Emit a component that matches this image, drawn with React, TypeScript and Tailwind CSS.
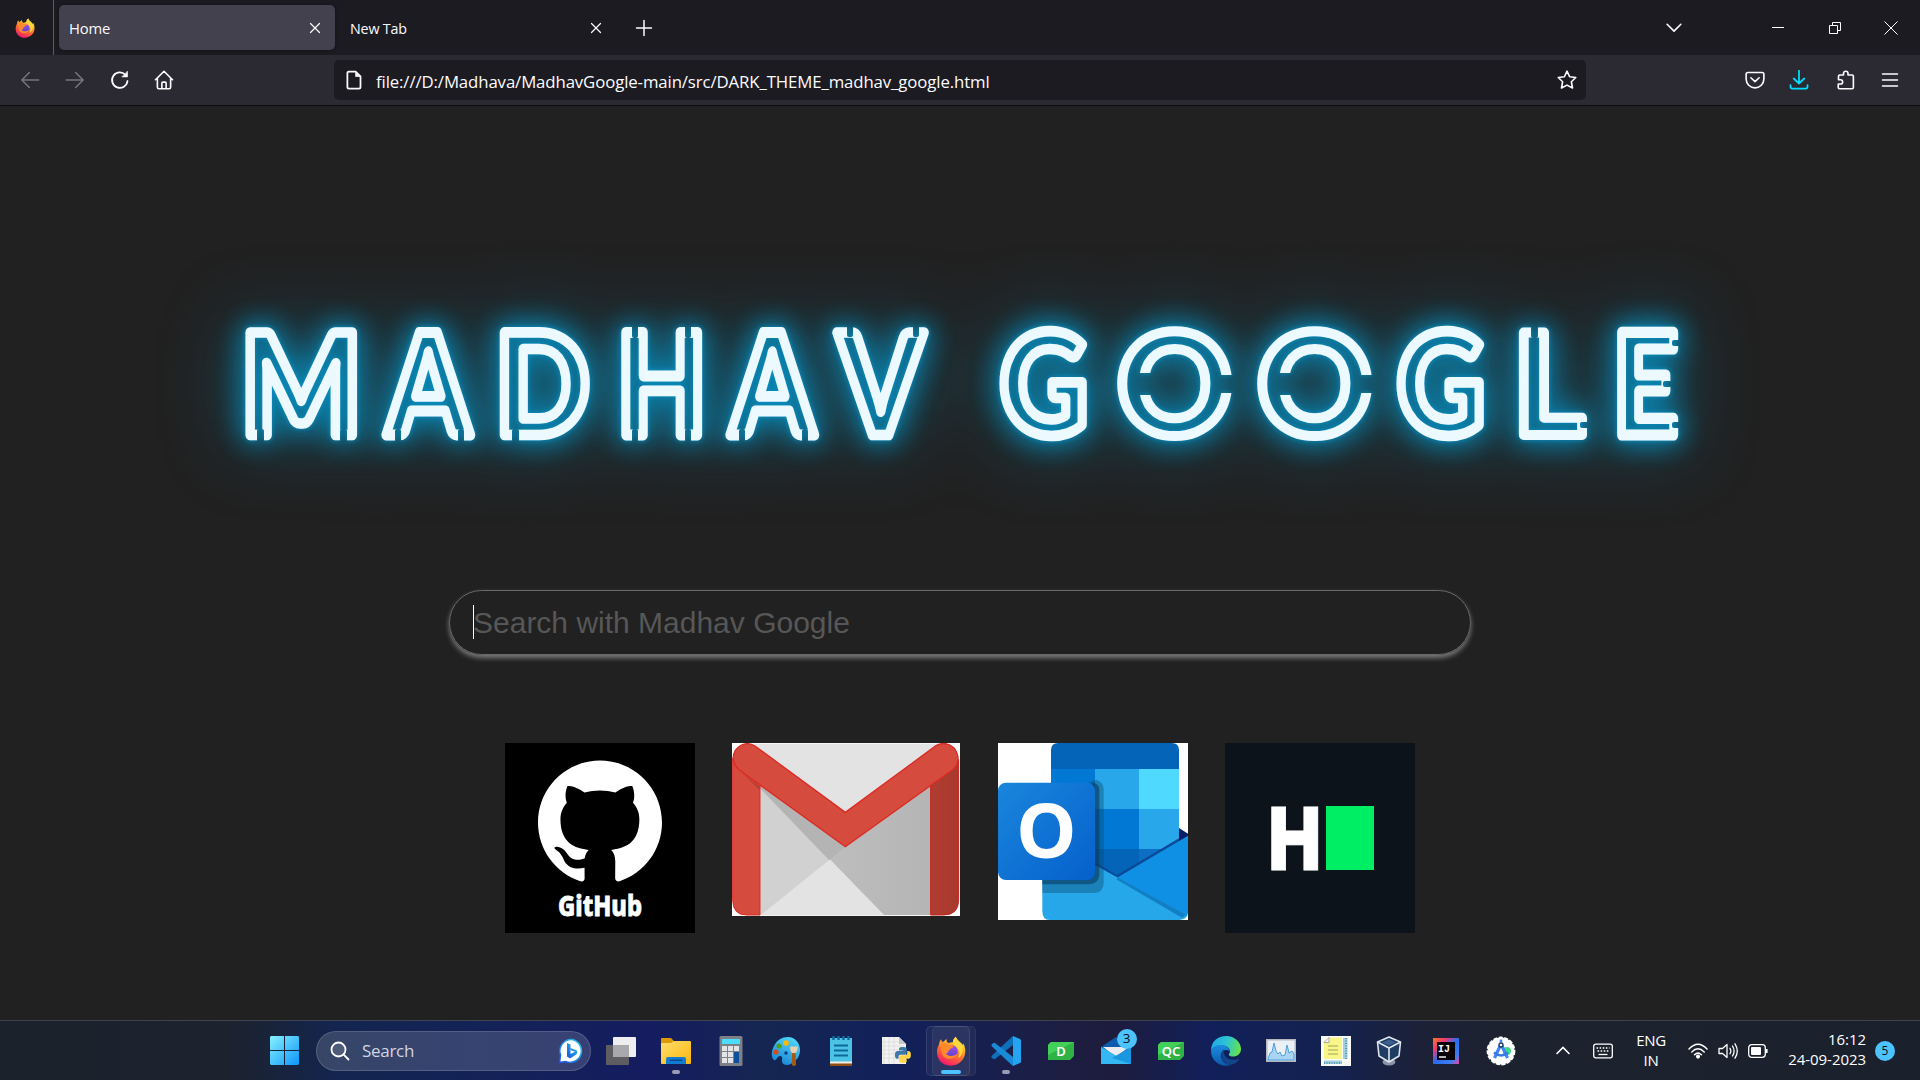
import React from "react";
import { SiGithub } from "react-icons/si";

const UI = "font-['Open_Sans','Noto_Sans',sans-serif]";

function Firefox({ size, id }: { size: number; id: string }) {
  return (
    <svg width={size} height={size} viewBox="0 0 30 30">
      <defs>
        <linearGradient id={id + "a"} x1="0.8" y1="0" x2="0.3" y2="1">
          <stop offset="0" stopColor="#fff44f" />
          <stop offset="0.3" stopColor="#ffb52e" />
          <stop offset="0.6" stopColor="#ff6a33" />
          <stop offset="1" stopColor="#f0146e" />
        </linearGradient>
        <linearGradient id={id + "b"} x1="0.5" y1="0" x2="0.5" y2="1">
          <stop offset="0" stopColor="#a04fe8" />
          <stop offset="1" stopColor="#5b3fd0" />
        </linearGradient>
      </defs>
      <path fill={`url(#${id}a)`} d="M17 6 C17 3 19 1.4 20 .8 C20.3 4 25 6 26.5 9 C27 8.6 27 7.5 27 7.3 C30 11 30.5 19 26 24.5 C20 31.500 9 31 4 25 C0 20 .3 13 3 8.500 C3.200 6 4.200 4 5 3.200 C5.200 4.500 6 5.800 7 6 C9 4.500 9.500 3.500 10.500 3 C10.500 5 11 6 12 7 Z" />
      <circle cx="15.500" cy="15.500" r="6.300" fill={`url(#${id}b)`} />
      <path fill="#ff8a2b" d="M3.500 9 C6 6.500 11 7 13 9 L18 9.500 C17.500 12 14.500 12 14 13.500 C12 14 13 17 10 17.500 C11 20 17 21.500 21 17.500 C20 24 9 25 6 18 C5 15 6 12 3.500 9Z" />
      <path fill="#ffd93b" d="M17 6 C17 3 19 1.400 20 .8 C20.300 4 25 6 26.500 10 C28 15 25 21 22 22 C25 17 23 11 17 8Z" />
    </svg>
  );
}

function Icon({ children, size = 20, color = "#fbfbfe", w = 1.2 }: { children: React.ReactNode; size?: number; color?: string; w?: number }) {
  return (
    <svg width={size} height={size} viewBox="0 0 16 16" fill="none" stroke={color} strokeWidth={w} strokeLinecap="round" strokeLinejoin="round">
      {children}
    </svg>
  );
}

const CloseMark = () => (
  <Icon size={12} w={1.6}>
    <path d="M2 2l12 12M14 2L2 14" />
  </Icon>
);

function TabStrip() {
  return (
    <div className="flex h-[55px] items-center bg-[#1c1b22]">
      <div className="flex h-full w-[54px] items-center border-r border-[#5b5b66] pl-[15px]">
        <Firefox size={20} id="fs" />
      </div>
      <div className="ml-[5px] flex h-[45px] w-[276px] items-center justify-between rounded-[5px] bg-[#42414d] pl-[10px] pr-[14px] shadow-[0_0_4px_rgba(0,0,0,0.4)]">
        <span className="pt-px text-[14.800px] leading-5 tracking-[-0.2px] text-[#fbfbfe]">Home</span>
        <CloseMark />
      </div>
      <div className="flex h-[45px] w-[282px] items-center justify-between pl-[15px] pr-[15px]">
        <span className="pt-[2px] text-[14.300px] leading-5 tracking-[-0.2px] text-[#fbfbfe]">New Tab</span>
        <CloseMark />
      </div>
      <div className="ml-[16.500px]">
        <Icon w={1.2}><path d="M8 2v12M2 8h12" /></Icon>
      </div>
      <div className="ml-auto flex items-center">
        <div className="flex w-[103px] justify-start"><Icon w={1.300}><path d="M2.500 5l5.500 5.500L13.500 5" /></Icon></div>
        <div className="flex w-[57px] justify-start pl-[5px]"><div className="h-px w-3 bg-white" /></div>
        <svg width="14" height="14" viewBox="0 0 14 14" fill="none" stroke="#fff" className="ml-[4px]">
          <path d="M1.500 4.500h8v8h-8zM4.500 4.500v-3h8v8h-3" />
        </svg>
        <svg width="14" height="14" viewBox="0 0 14 14" stroke="#fff" className="ml-[42px] mr-[22px]">
          <path d="M.5 .5l13 13M13.500 .5l-13 13" />
        </svg>
      </div>
    </div>
  );
}

function NavBar() {
  return (
    <div className="flex h-[51px] items-center border-b border-[#0c0c0d] bg-[#2b2a33]">
      <div className="flex w-[334px] items-center gap-[24.800px] pl-5">
        <Icon color="#77767e"><path d="M15 8H1.500M7.500 2L1.500 8l6 6" /></Icon>
        <Icon color="#77767e"><path d="M1 8h13.500M8.500 2l6 6-6 6" /></Icon>
        <Icon w={1.400}>
          <path d="M14 8.800A6.200 6.200 0 1 1 12.300 3.800" />
          <path d="M14 1.200v4.300H9.700z" fill="#fbfbfe" strokeWidth=".5" />
        </Icon>
        <Icon w={1.300}>
          <path d="M1.200 7.800L8 1l6.800 6.800M2.700 6.500v7.300q0 1.200 1.200 1.200h8.200q1.200 0 1.200-1.200V6.500M6.300 15v-4.500q0-.8.8-.8h1.800q.8 0 .8.8V15" />
        </Icon>
      </div>
      <div className="flex h-10 w-[1252px] items-center rounded-[5px] bg-[#1c1b22] pl-[10px] pr-[9px]">
        <Icon w={1.400}>
          <path d="M3.500 1.200h5.800l3.900 3.900v8.500q0 1.300-1.300 1.300H4q-1.300 0-1.300-1.300V2.500q0-1.300 1.300-1.300" />
          <path d="M9.300 1.500v3.700h3.700z" fill="#fbfbfe" strokeWidth=".6" />
        </Icon>
        <span className="ml-[12px] whitespace-nowrap pt-[3px] text-[16.800px] leading-6 tracking-[-0.115px] text-[#fbfbfe]">
          file:///D:/Madhava/MadhavGoogle-main/src/DARK_THEME_madhav_google.html
        </span>
        <div className="ml-auto">
          <Icon w={1.300}>
            <path d="M8 .9l2.100 4.500 4.900.6-3.500 3.400.9 5L8 12.100 3.600 14.400l.9-5L1 6l4.900-.6z" />
          </Icon>
        </div>
      </div>
      <div className="ml-auto flex items-center pr-5">
        <Icon w={1.300}>
          <path d="M2.300 2h11.400q1.400 0 1.400 1.400v3.800a7.100 7.100 0 0 1-14.200 0V3.400Q.9 2 2.300 2z" />
          <path d="M4.700 6.200L8 9.300l3.300-3.100" />
        </Icon>
        <div className="ml-[24px]">
          <Icon color="#00ddff" w={1.400}><path d="M8 .5v10M3.800 6.800L8 10.800l4.200-4M1.200 12v1.300q0 1.500 1.500 1.500h10.600q1.500 0 1.500-1.500V12" /></Icon>
        </div>
        <div className="ml-[27px]">
          <Icon w={1.300}>
            <path d="M2 6.300V5q0-1 1-1h3V2.800a1.800 1.800 0 0 1 3.600 0V4h3.300q1 0 1 1v9q0 1-1 1H2.800q-1 0-1-1v-2.800h1.800a1.700 1.700 0 0 0 0-3.400H2z" />
          </Icon>
        </div>
        <div className="ml-[24px]">
          <Icon w={1.200}><path d="M2 3.200h12M2 8h12M2 12.800h12" /></Icon>
        </div>
      </div>
    </div>
  );
}

// [glyph, pen x, horizontal stretch]
const LETTERS: [string, number, number][] = [
  ["M", 240.5, 0.905],
  ["A", 387, 0.835],
  ["D", 495, 0.88],
  ["H", 617, 0.82],
  ["A", 731, 0.835],
  ["V", 838, 0.86],
  [" ", 960, 1],
  ["G", 1000, 0.86],
  ["O", 1117.5, 1],
  ["O", 1257.5, 1],
  ["G", 1397, 0.86],
  ["L", 1513.5, 0.96],
  ["E", 1613, 0.8],
];

// [x, y, width, height] of the breaks between neighbouring neon tubes
const GAPS: [number, number, number, number][] = [
  [257, 429, 7, 14], [340, 429, 7, 14],
  [395, 429, 6, 14], [458, 429, 6, 14],
  [512, 429, 7, 14],
  [632, 324, 6, 14], [632, 429, 6, 14], [685, 324, 6, 14], [685, 429, 6, 14],
  [739, 429, 6, 14], [802, 429, 6, 14],
  [847, 324, 6, 13], [913, 324, 6, 13],
  [1130, 373, 24, 22], [1218, 375, 24, 18],
  [1270, 373, 24, 22], [1358, 375, 24, 18],
  [1531, 324, 7, 14], [1580, 422, 16, 6],
  [1672, 340, 16, 6], [1672, 422, 16, 6], [1663, 381, 12, 6],
];

function NeonTitle() {
  return (
    <h1 className="mt-[124px] h-[300px]">
      <svg width="1920" height="300" viewBox="0 230 1920 300" className="block overflow-visible">
        <defs>
          <mask id="breaks" maskUnits="userSpaceOnUse" x="200" y="300" width="1520" height="170">
            <rect x="200" y="300" width="1520" height="170" fill="#fff" />
            {GAPS.map(([x, y, w, h], i) => (
              <rect key={i} x={x} y={y} width={w} height={h} rx="2" fill="#000" />
            ))}
          </mask>
          <filter id="neon" filterUnits="userSpaceOnUse" x="100" y="170" width="1720" height="420" colorInterpolationFilters="sRGB">
            <feGaussianBlur in="SourceAlpha" stdDeviation="2.500" result="b1" />
            <feGaussianBlur in="SourceAlpha" stdDeviation="14" result="b2" />
            <feGaussianBlur in="SourceAlpha" stdDeviation="38" result="b3" />
            <feFlood floodColor="#0899d2" floodOpacity="0.85" />
            <feComposite in2="b1" operator="in" result="g1" />
            <feFlood floodColor="#0a86b2" floodOpacity="1" />
            <feComposite in2="b2" operator="in" result="g2" />
            <feFlood floodColor="#0d7fa6" floodOpacity="1" />
            <feComposite in2="b3" operator="in" result="g3" />
            <feMerge>
              <feMergeNode in="g3" />
              <feMergeNode in="g2" />
              <feMergeNode in="g2" />
              <feMergeNode in="g1" />
              <feMergeNode in="SourceGraphic" />
            </feMerge>
          </filter>
        </defs>
        <g filter="url(#neon)">
          <g mask="url(#breaks)" fontFamily="Lato, sans-serif" fontWeight="900" fontSize="141" fill="none" stroke="#ecfaff" strokeWidth="10" strokeLinejoin="round">
            {LETTERS.map(([ch, x, s], i) => (
              <text key={i} transform={`translate(${x} 435) scale(${s} 1)`} vectorEffect="non-scaling-stroke" xmlSpace="preserve">{ch}</text>
            ))}
          </g>
        </g>
      </svg>
    </h1>
  );
}

function GitHubTile() {
  return (
    <div className="flex h-[190px] w-[190px] flex-col items-center bg-black pt-4">
      <SiGithub size={124} color="#fff" />
      <svg width="110" height="48" viewBox="0 0 110 48" className="-mt-[4.500px] shrink-0 overflow-visible">
        <text x="13" y="37" textLength="84" lengthAdjust="spacingAndGlyphs" fontFamily="'Noto Sans', sans-serif" fontWeight="800" fontSize="29" fill="#fff" stroke="#fff" strokeWidth=".8">GitHub</text>
      </svg>
    </div>
  );
}

function GmailTile() {
  return (
    <svg width="228" height="173" viewBox="0 0 684 519">
      <defs>
        <linearGradient id="gr" x1="0" x2="1"><stop offset="0" stopColor="#c4c4c4" /><stop offset="1" stopColor="#b5b5b5" /></linearGradient>
        <linearGradient id="gd" x1="0" x2="1"><stop offset="0" stopColor="#b03d31" /><stop offset="1" stopColor="#a8392e" /></linearGradient>
      </defs>
      <rect width="684" height="519" fill="#fff" />
      <rect x="40" y="2" width="600" height="515" fill="#e3e3e3" />
      <path d="M86 516V130L291 352z" fill="#d1d1d1" />
      <path d="M45 92L340 210 596 130V516H456z" fill="url(#gr)" />
      <path d="M45 95L210 210 340 311 291 352z" fill="#b4b4b4" />
      <path d="M86 145L291 352 86 517z" fill="#d1d1d1" />
      <path d="M86 517L291 352 456 517z" fill="#e3e3e3" />
      <path d="M2 45V470Q2 516 44 516H84V130z" fill="#d54b3d" stroke="#dc2a24" strokeWidth="3" />
      <path d="M596 120V516H634Q680 516 680 470V50z" fill="url(#gd)" stroke="#c22018" strokeWidth="3" />
      <path d="M30 90L84 132V142z" fill="#b53f33" />
      <path d="M69 9L340 208 612 8Q640-8 666 15 690 48 666 77L340 311 18 78Q-6 50 10 22 36-10 69 9z" fill="#d54b3d" stroke="#dc2a24" strokeWidth="4" />
    </svg>
  );
}

function OutlookTile() {
  return (
    <svg width="190" height="177" viewBox="0 0 570 531">
      <defs>
        <linearGradient id="ob" x1="0" y1="0" x2="1" y2="1"><stop offset="0" stopColor="#1a86dc" /><stop offset="1" stopColor="#0560cc" /></linearGradient>
        <clipPath id="oc"><path d="M0 0H570V531H0z" /></clipPath>
      </defs>
      <g clipPath="url(#oc)">
        <rect width="570" height="531" fill="#fff" />
        <path d="M543 255L570 272V290L543 300z" fill="#061f66" />
        <path d="M159 22Q159 0 181 0H521Q543 0 543 22V300L355 410 159 300z" fill="#0364b8" />
        <path d="M159 78H291V198H159z" fill="#0078d4" />
        <path d="M291 78H423V198H291z" fill="#28a8ea" />
        <path d="M423 78H543V198H423z" fill="#50d9ff" />
        <path d="M291 198H423V318H291z" fill="#0078d4" />
        <path d="M423 198H543V318H423z" fill="#28a8ea" />
        <path d="M423 318H543L423 370z" fill="#0c6fc4" />
        <path d="M291 358L357 396 543 286V310L357 412 291 374z" fill="#0a4a98" />
        <path d="M570 278V531H300L357 404z" fill="#1090e4" />
        <path d="M133 280L291 366 570 520V531H155Q133 531 133 505z" fill="#25a7ea" />
        <path d="M357 402L565 516 552 524 357 410z" fill="#127fc4" />
        <path d="M570 510V531H545Q568 528 570 510z" fill="#fff" />
        <path d="M133 411V450H285Q317 450 317 420V140Q317 118 295 110L270 119z" fill="#0b4a70" opacity=".4" />
        <path d="M133 411V424H275Q304 420 304 395V140Q304 122 284 119z" fill="#083a60" opacity=".6" />
        <rect x="0" y="119" width="291" height="292" rx="24" fill="url(#ob)" />
        <text x="145" y="346" textAnchor="middle" textLength="182" lengthAdjust="spacingAndGlyphs" fontFamily="'Open Sans', sans-serif" fontWeight="700" fontSize="228" fill="#fff">O</text>
      </g>
    </svg>
  );
}

function HackerRankTile() {
  return (
    <div className="flex h-[190px] w-[190px] items-center bg-[#0c131b] pl-[34px]">
      <svg width="70" height="110" viewBox="0 0 70 110" className="shrink-0 overflow-visible">
        <text x="9.500" y="86.500" textLength="52.500" lengthAdjust="spacingAndGlyphs" fontFamily="Inter, sans-serif" fontWeight="900" fontSize="86.500" fill="#fff" stroke="#fff" strokeWidth="1">H</text>
      </svg>
      <div className="-ml-[2.500px] h-16 w-12 bg-[#00ee64]" />
    </div>
  );
}

function Cell({ children, dot }: { children: React.ReactNode; dot?: boolean }) {
  return (
    <div className="relative flex h-full w-[55px] items-center justify-center">
      {children}
      {dot && <div className="absolute bottom-[6px] h-1 w-2 rounded-full bg-[#9a9cb4]" />}
    </div>
  );
}

function Badge({ label }: { label: string }) {
  return (
    <svg width="26" height="18" viewBox="0 0 26 18">
      <path d="M3 0H26V14L22 18H0V3z" fill="#2fb344" />
      <path d="M3 0H26L0 13V3z" fill="#43d058" />
      <text x="13" y="13.800" textAnchor="middle" fontFamily="'Noto Sans', sans-serif" fontWeight="600" fontSize="13" fill="#fff">{label}</text>
    </svg>
  );
}

const PY =
  "M14.25.18l.9.2.73.26.59.3.45.32.34.34.25.34.16.33.1.3.04.26.02.2-.01.13V8.500l-.05.63-.13.55-.21.46-.26.38-.3.31-.33.25-.35.19-.35.14-.33.1-.3.07-.26.04-.21.02H8.770l-.69.05-.59.14-.5.22-.41.27-.33.32-.27.35-.2.36-.15.37-.1.35-.07.32-.04.27-.02.21v3.060H3.170l-.21-.03-.28-.07-.32-.12-.35-.18-.36-.26-.36-.36-.35-.46-.32-.59-.28-.73-.21-.88-.14-1.050-.05-1.230.06-1.220.16-1.040.24-.87.32-.71.36-.57.4-.44.42-.33.42-.24.4-.16.36-.1.32-.05.24-.01h.16l.06.01h8.160v-.83H6.180l-.01-2.750-.02-.37.05-.34.11-.31.17-.28.25-.26.31-.23.38-.2.44-.18.51-.15.58-.12.64-.1.71-.06.77-.04.84-.02z";

function TaskIcons() {
  return (
    <div className="flex h-full">
      <Cell>
        <svg width="30" height="28" viewBox="0 0 30 28">
          <rect y="8" width="23" height="20" rx="1" fill="#5e5e62" />
          <rect x="7" width="23" height="20" rx="1" fill="#eeeef0" />
          <rect x="7" y="8" width="16" height="12" fill="#a9a9ad" />
        </svg>
      </Cell>
      <Cell dot>
        <svg width="32" height="28" viewBox="0 0 32 28">
          <defs><linearGradient id="fo" x1="0" y1="0" x2="1" y2="1"><stop offset="0" stopColor="#ffdf6b" /><stop offset="1" stopColor="#f9b60f" /></linearGradient></defs>
          <path d="M1 2Q1 1 2 1H11L14 4H30V12H1z" fill="#dd9a05" />
          <path d="M1 7Q1 6 2 6H11L14 4H30Q31 4 31 5V26Q31 27 30 27H2Q1 27 1 26z" fill="url(#fo)" />
          <path d="M6 27V22Q6 20 8 20H24Q26 20 26 22V27z" fill="#127cd0" />
          <rect x="9.500" y="22.500" width="13" height="1.400" rx=".7" fill="#064a92" />
        </svg>
      </Cell>
      <Cell>
        <svg width="24" height="30" viewBox="0 0 24 30">
          <rect x=".5" width="23" height="30" rx="1.500" fill="#7d8086" />
          <rect x="3" y="3" width="18" height="5" fill="#4cdcff" />
          <path d="M3 10h5v5H3zM9 10h5v5H9zM15 10h5v5h-5zM3 16h5v5H3zM9 16h5v5H9zM3 22h5v5H3zM9 22h5v5H9z" fill="#e2e4e8" />
          <rect x="15" y="16" width="5" height="11" fill="#0e4f9e" />
        </svg>
      </Cell>
      <Cell>
        <svg width="30" height="30" viewBox="0 0 30 30">
          <defs><linearGradient id="pa" x1=".7" y1="0" x2=".2" y2="1"><stop offset="0" stopColor="#50d4f8" /><stop offset="1" stopColor="#1784d2" /></linearGradient></defs>
          <path d="M17 1C24 1 29 7 29 14C29 20 26 24 23 25C20 30 12 30 11 26C11 23 12 20 9 20C6 20 6 25 3 24C0 22 0 15 3 10C6 4 11 1 17 1z" fill="url(#pa)" />
          <circle cx="15" cy="7" r="2.800" fill="#f9b80e" /><circle cx="8" cy="10" r="2.600" fill="#4a9c22" /><circle cx="5" cy="16" r="2.600" fill="#d64a1c" /><circle cx="15" cy="17" r="1.800" fill="#0c3f90" />
          <path d="M21 15h3.500l.5 14q-2 2-4 0z" fill="#a55a14" />
          <path d="M19 10.500h8L26 15l-1.500 2H21l-1.500-2z" fill="#e8cfae" />
        </svg>
      </Cell>
      <Cell>
        <svg width="24" height="30" viewBox="0 0 24 30">
          <rect x="1" y="2" width="22" height="27" fill="#4cc2e4" />
          <path d="M1 25.500H23V28H1z" fill="#f2ece2" /><path d="M1 27.500H23V30H1z" fill="#8f4d12" />
          <path d="M4.500 0v4M9.500 0v4M14.500 0v4M19.500 0v4" stroke="#0c6ea0" strokeWidth="2.400" />
          <path d="M5 9.500h14M5 14.500h14M5 19.500h14" stroke="#0b6a9c" strokeWidth="2" />
        </svg>
      </Cell>
      <Cell>
        <svg width="30" height="30" viewBox="0 0 30 30">
          <path d="M1 1H18L25 8V28H1z" fill="#f2f2f2" />
          <path d="M3 1v27M1 6h18M1 10h22M1 14h22M1 18h14M1 22h14M8 1v27M13 1v27" stroke="#d8d8d8" strokeWidth=".7" />
          <path d="M18 1v7h7z" fill="#c8c8c8" />
          <g transform="translate(14 11) scale(.66)">
            <path d={PY} fill="#3c79a8" />
            <path d={PY} transform="rotate(180 12 12)" fill="#ffd448" />
          </g>
        </svg>
      </Cell>
      <div className="relative flex h-full w-[55px] items-center justify-center">
        <div className="absolute left-[8px] top-[5px] h-[50px] w-[44px] rounded-[5px] border border-white/5 bg-white/5" />
        <div className="absolute left-[2px] top-[5px] h-[50px] w-[44px] rounded-[5px] border border-white/10 bg-white/5" />
        <div className="relative h-[30px]"><Firefox size={30} id="fb" /></div>
        <div className="absolute bottom-[6px] h-1 w-5 rounded-full bg-[#4cc2ff]" />
      </div>
      <Cell dot>
        <svg width="30" height="30" viewBox="0 0 30 30">
          <path d="M22 0L29 3Q30 3.500 30 4.500V25.500Q30 26.500 29 27L22 30z" fill="#25a4f2" />
          <path d="M22 0V9L4 23Q3 23.500 2 22.800L.5 21.300Q0 20.500 1 19.500L21 .8z" fill="#0e70b8" />
          <path d="M22 30V21L4 7Q3 6.500 2 7.200L.5 8.700Q0 9.500 1 10.500L21 29.200z" fill="#1a8ad6" />
        </svg>
      </Cell>
      <Cell><Badge label="D" /></Cell>
      <Cell>
        <svg width="32" height="28" viewBox="0 0 32 28">
          <path d="M1 10L16 0 31 10V27H1z" fill="#0c5cab" />
          <path d="M3 10H29L16 20z" fill="#ececf0" />
          <path d="M1 10L31 27H1z" fill="#35b8f2" /><path d="M31 10L12 21 31 27z" fill="#1b96e0" />
        </svg>
        <div className="absolute left-[28px] top-[8px] flex h-5 w-5 items-center justify-center rounded-full bg-[#4cc2ff] text-[13.500px] leading-none text-[#101018]">3</div>
      </Cell>
      <Cell><Badge label="QC" /></Cell>
      <Cell>
        <svg width="30" height="30" viewBox="0 0 30 30">
          <defs>
            <linearGradient id="e1" x1="0" y1=".3" x2="1" y2=".5"><stop offset="0" stopColor="#23a8e4" /><stop offset=".5" stopColor="#2cc4d4" /><stop offset="1" stopColor="#66e24a" /></linearGradient>
            <linearGradient id="e2" x1="0" y1="0" x2="0" y2="1"><stop offset="0" stopColor="#1b8ee0" /><stop offset="1" stopColor="#0c59a8" /></linearGradient>
          </defs>
          <path d="M0 13C1 5 7 0 15 0C24 0 30 6.500 30 13C30 18 26 20.500 22 20.500C18.500 20.500 17.500 19 18 18C20 16 19 10 12 9.500C6 9 1 11 0 15z" fill="url(#e1)" />
          <path d="M0 15C1 11 6 8.500 11 9C16 9.500 18 12.500 18.500 15C14 12 9 16 10 21C11 26 16 29 20 29C11 32 0 26 0 15z" fill="url(#e2)" />
          <path d="M12 14C9 18 10 24 15 27.500C21 31 27 26 28.500 22.500C24 25 16 24 13.500 19C12.500 17 12.500 15 13.500 13.500z" fill="#12468c" />
        </svg>
      </Cell>
      <Cell>
        <svg width="30" height="23" viewBox="0 0 30 23">
          <rect x=".75" y=".75" width="28.500" height="21.500" fill="#eaf0f5" stroke="#b4b8be" strokeWidth="1.500" />
          <path d="M2 20L4 14 6 13 8 4 10 12 12 15 14 13 16 17 19 16 21 6 23 14 26 12 28 15V21H2z" fill="#a9d5f2" stroke="#3c96dc" strokeWidth=".9" />
        </svg>
      </Cell>
      <Cell>
        <svg width="30" height="30" viewBox="0 0 30 30">
          <rect width="30" height="30" fill="#fafaf6" />
          <path d="M8 1.500H21V23H3V6.500z" fill="#f8f688" />
          <path d="M8 1.500V6.500H3z" fill="#fff" stroke="#888" strokeWidth=".7" />
          <path d="M7 10h10M7 14h10M7 18h10" stroke="#9a9858" strokeWidth=".9" />
          <path d="M22 2h4.500v21H22zM3 24.500h18V28H3z" fill="#9fd0e0" />
          <path d="M25 2v21M3 27h18" stroke="#4b8296" strokeWidth="1.500" strokeDasharray="1 1.500" />
        </svg>
      </Cell>
      <Cell>
        <svg width="26" height="30" viewBox="0 0 26 30" className="mr-[4px]">
          <ellipse cx="13" cy="26" rx="6.500" ry="3.500" fill="#8a96a8" />
          <path d="M13 1L24.500 6 23 20 13 26 3 20 1.500 6z" fill="#1e3c64" stroke="#dfe5ec" strokeWidth="1.600" strokeLinejoin="round" />
          <path d="M1.500 6L13 12 24.500 6M13 12V26" fill="none" stroke="#dfe5ec" strokeWidth="1.600" />
          <path d="M13 3.500L20 6.500 13 9.500 6 6.500z" fill="#3c5f8e" />
        </svg>
      </Cell>
      <Cell>
        <svg width="26" height="26" viewBox="0 0 26 26">
          <defs><linearGradient id="ij" x1="0" y1="0" x2="1" y2="1"><stop offset="0" stopColor="#fb7a24" /><stop offset=".25" stopColor="#f43a6e" /><stop offset=".5" stopColor="#2a6cf0" /><stop offset=".8" stopColor="#3d7cf0" /><stop offset="1" stopColor="#f0449a" /></linearGradient></defs>
          <rect width="26" height="26" fill="url(#ij)" />
          <rect x="4" y="4" width="18" height="18" fill="#060208" />
          <text x="5" y="13.500" fontFamily="'Liberation Mono', monospace" fontWeight="700" fontSize="10" fill="#fff">IJ</text>
          <rect x="6" y="18.300" width="7" height="1.400" fill="#fff" />
        </svg>
      </Cell>
      <Cell>
        <svg width="30" height="30" viewBox="0 0 30 30">
          <circle cx="15" cy="15" r="13.400" fill="#fff" stroke="#fff" strokeWidth="2" strokeDasharray="4 1.500" />
          <circle cx="21" cy="15" r="4" fill="#3ddc84" />
          <path d="M15 8L8.500 22M15 8l6.500 14" stroke="#4285f4" strokeWidth="3.200" />
          <path d="M8 16.500q7 6 14 0" fill="none" stroke="#3a78e6" strokeWidth="2.600" />
          <path d="M15 3.500v3" stroke="#4285f4" strokeWidth="2.500" />
          <circle cx="15" cy="9" r="2" fill="#fff" stroke="#173a5e" strokeWidth="1.300" />
        </svg>
      </Cell>
    </div>
  );
}

function Tray() {
  return (
    <div className="ml-auto flex h-full items-center text-[16px] leading-5 text-white">
      <svg width="14" height="9" viewBox="0 0 14 9" fill="none" stroke="#fff" strokeWidth="1.600" strokeLinecap="round"><path d="M1 7.500l6-6 6 6" /></svg>
      <svg className="ml-[23px]" width="20" height="16" viewBox="0 0 20 16" fill="none" stroke="#fff" strokeWidth="1.300">
        <rect x=".7" y="1.200" width="18.600" height="13.600" rx="2" />
        <path d="M3.500 5h13M4.500 8h11" strokeDasharray="1.600 1.500" strokeWidth="1.600" /><path d="M5.500 11.500h9" />
      </svg>
      <div className="-mt-[2px] ml-[22px] w-8 text-center text-[15px] tracking-[-0.3px]"><div>ENG</div><div>IN</div></div>
      <svg className="ml-[21px]" width="20" height="16" viewBox="0 0 20 16" fill="none" stroke="#fff" strokeWidth="1.500" strokeLinecap="round">
        <path d="M1 6Q10-3.500 19 6M3.800 9Q10 2.500 16.200 9M6.600 11.800Q10 8.500 13.400 11.800" /><circle cx="10" cy="13.600" r="1.300" fill="#fff" />
      </svg>
      <svg className="ml-[10px]" width="20" height="18" viewBox="0 0 20 18" fill="none" stroke="#fff" strokeWidth="1.300" strokeLinecap="round" strokeLinejoin="round">
        <path d="M1 6.500H4.500L9 2.500V15.500L4.500 11.500H1zM12 6.300q1.700 2.700 0 5.400M14.500 4q3.200 5 0 10M17 1.800q4.600 7.200 0 14.400" />
      </svg>
      <svg className="ml-[10px]" width="20" height="14" viewBox="0 0 20 14" fill="none" stroke="#fff" strokeWidth="1.300">
        <rect x=".7" y=".7" width="16.600" height="12.600" rx="3" /><rect x="3" y="3" width="10" height="8" rx="1" fill="#fff" stroke="none" /><path d="M18.600 5v4" strokeWidth="2" />
      </svg>
      <div className="-mt-[3px] ml-[18px] w-20 whitespace-nowrap text-right text-[15px] tracking-[-0.050px]"><div>16:12</div><div>24-09-2023</div></div>
      <div className="ml-[9px] mr-[25px] flex h-5 w-5 items-center justify-center rounded-full bg-[#4cc2ff] text-[12px] text-[#101018]">5</div>
    </div>
  );
}

function Taskbar() {
  return (
    <div className="flex h-[60px] items-center border-t border-[#3d434f] bg-[linear-gradient(90deg,#1c222c_0px,#1c222e_230px,#132550_340px,#14215a_540px,#151c60_650px,#152652_760px,#12205a_900px,#1a1f48_1020px,#1e1c3c_1110px,#111f5a_1210px,#142250_1330px,#1c2138_1420px,#1c222e_1510px,#1a212c_1920px)]">
      <svg className="ml-[270px]" width="29" height="29" viewBox="0 0 29 29">
        <defs><linearGradient id="wi" gradientUnits="userSpaceOnUse" x1="0" y1="0" x2="29" y2="29"><stop offset="0" stopColor="#86f0fd" /><stop offset="1" stopColor="#0c96fa" /></linearGradient></defs>
        <path fill="url(#wi)" d="M1 0H14V14H0V1zM15 0H28L29 1V14H15zM0 15H14V29H1L0 28zM15 15H29V28L28 29H15z" />
      </svg>
      <div className="ml-[17px] flex h-10 w-[275px] items-center rounded-full border border-white/15 bg-white/15 pl-[13px] pr-[6px]">
        <svg width="20" height="20" viewBox="0 0 20 20" fill="rgba(255,255,255,.12)" stroke="#fff" strokeWidth="1.800" strokeLinecap="round"><circle cx="8.500" cy="8.500" r="7" /><path d="M13.700 13.700l4.800 4.800" /></svg>
        <span className="ml-[12px] text-[17px] leading-6 tracking-[-0.3px] text-[#d2d5e0]">Search</span>
        <svg className="ml-auto" width="26" height="26" viewBox="0 0 26 26">
          <defs><linearGradient id="bi" x1="1" y1="0" x2="0" y2="1"><stop offset="0" stopColor="#28c8e8" /><stop offset="1" stopColor="#1b50e0" /></linearGradient></defs>
          <path d="M13.500 1.500A11.500 11.500 0 1 1 7.500 23.500L1.500 24.500 2.500 17A11.500 11.500 0 0 1 13.500 1.500z" fill="#fff" stroke="url(#bi)" strokeWidth="1.600" />
          <path d="M9 5L12.500 6.500V16L17 13.800 13 12.200 12.500 10 19 12.500Q20 15.500 17.500 17L12 20.500 9 18.500z" fill="url(#bi)" />
        </svg>
      </div>
      <div className="ml-[2.500px] h-full"><TaskIcons /></div>
      <Tray />
    </div>
  );
}

export default function App() {
  return (
    <div className={"flex h-[1080px] w-[1920px] flex-col overflow-hidden bg-[#212121] " + UI}>
      <TabStrip />
      <NavBar />
      <main className="flex flex-1 flex-col items-center overflow-hidden">
        <NeonTitle />
        <div className="mt-[60px] flex h-[65px] w-[1022px] shrink-0 items-center rounded-[33px] border border-[#696969] pl-[23px] shadow-[0_3px_5px_#7a7a7a]">
          <div className="-mt-[2px] h-[34px] w-px bg-white" />
          <span className="-ml-px font-['Liberation_Sans',Arial,sans-serif] text-[30px] leading-[34px] text-[#575757]">Search with Madhav Google</span>
        </div>
        <div className="mt-[88px] flex items-start gap-[37.300px]">
          <GitHubTile />
          <GmailTile />
          <OutlookTile />
          <HackerRankTile />
        </div>
      </main>
      <Taskbar />
    </div>
  );
}
